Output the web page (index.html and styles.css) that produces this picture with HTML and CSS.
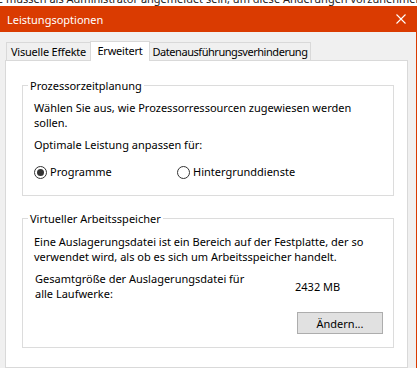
FILE: index.html
```html
<!DOCTYPE html>
<html lang="de">
<head>
  <meta charset="UTF-8">
  <meta name="viewport" content="width=device-width, initial-scale=1.0">
  <title>Leistungsoptionen</title>
  <link rel="stylesheet" href="styles.css">
</head>
<body>
  <div class="behind">
    <p class="behind-text">Sie müssen als Administrator angemeldet sein, um diese Änderungen vorzunehmen.</p>
    <span class="behind-bar"></span>
  </div>

  <div class="window">
    <header class="titlebar">
      <span class="title">Leistungsoptionen</span>
      <svg class="close" width="10" height="10" viewBox="0 0 10 10">
        <path d="M0.5 0.5 L9.5 9.5 M9.5 0.5 L0.5 9.5" stroke="#fff" stroke-width="1.1" fill="none"/>
      </svg>
    </header>

    <div class="dialog">
      <ul class="tabs">
        <li class="tab tab-first">Visuelle Effekte</li>
        <li class="tab active">Erweitert</li>
        <li class="tab tab-last">Datenausführungsverhinderung</li>
      </ul>

      <div class="page">
        <fieldset class="group">
          <legend>Prozessorzeitplanung</legend>
          <p>Wählen Sie aus, wie Prozessorressourcen zugewiesen werden<br>sollen.</p>
          <p class="spaced">Optimale Leistung anpassen für:</p>
          <div class="radios">
            <label class="radio radio-first"><span class="dot checked"></span>Programme</label>
            <label class="radio"><span class="dot"></span>Hintergrunddienste</label>
          </div>
        </fieldset>

        <fieldset class="group group-memory">
          <legend>Virtueller Arbeitsspeicher</legend>
          <p>Eine Auslagerungsdatei ist ein Bereich auf der Festplatte, der so<br>verwendet wird, als ob es sich um Arbeitsspeicher handelt.</p>
          <div class="size-row">
            <span class="size-label">Gesamtgröße der Auslagerungsdatei für<br>alle Laufwerke:</span>
            <span class="size-value">2432 MB</span>
          </div>
          <div class="actions">
            <button class="btn">Ändern...</button>
          </div>
        </fieldset>
      </div>
    </div>
  </div>
</body>
</html>
```

FILE: styles.css
```css
html, body {
  margin: 0;
  height: 100%;
}

body {
  background-color: #fff;
  font-family: "Noto Sans", "Open Sans", sans-serif;
  font-size: 11px;
  color: #000;
  overflow: hidden;
  display: flex;
  flex-direction: column;
}

.behind {
  display: flex;
  height: 6px;
  overflow: hidden;
}

.behind-text {
  margin: -9px 0 0 -12px;
  line-height: 15px;
  font-size: 11px;
  color: #222;
  white-space: nowrap;
}

.behind-bar {
  margin-left: auto;
  margin-right: 41px;
  width: 3px;
  background-color: #cfcfcf;
}

.window {
  flex: 1;
  display: flex;
  flex-direction: column;
  width: 416px;
  border-right: 1px solid #da3b01;
}

.titlebar {
  display: flex;
  justify-content: space-between;
  align-items: center;
  height: 26px;
  padding: 0 10px 0 7px;
  background-color: #da3b01;
  color: #fff;
  font-size: 11px;
}

.close {
  display: block;
}

.dialog {
  flex: 1;
  display: flex;
  flex-direction: column;
  background-color: #f0f0f0;
  padding: 9px 8px 0 5px;
}

.tabs {
  display: flex;
  align-items: flex-end;
  list-style: none;
  margin: 0;
  padding: 0 0 0 1px;
}

.tab {
  box-sizing: border-box;
  height: 18px;
  line-height: 17px;
  text-align: center;
  white-space: nowrap;
  border: 1px solid #d9d9d9;
  border-bottom: none;
  background-color: #f0f0f0;
  letter-spacing: -0.2px;
}

.tab-first {
  width: 84px;
  border-right: none;
}

.tab-last {
  width: 161px;
  border-left: none;
  letter-spacing: -0.45px;
}

.tab.active {
  position: relative;
  width: 60px;
  height: 20px;
  margin-bottom: -1px;
  background-color: #fff;
}

.page {
  flex: 1;
  background-color: #fff;
  border: 1px solid #d9d9d9;
  padding-top: 17px;
}

.group {
  margin: 0 13px 0 16px;
  padding: 7px 10px 15px 11px;
  border: 1px solid #dcdcdc;
}

.group legend {
  padding: 0 2px;
  margin-left: -6px;
  line-height: 15px;
}

.group p {
  margin: 0;
  line-height: 15px;
}

.group p.spaced {
  margin-top: 7px;
}

.radios {
  display: flex;
  margin-top: 12px;
  line-height: 16px;
}

.radio {
  display: flex;
  align-items: center;
  gap: 3px;
}

.radio-first {
  width: 143px;
}

.dot {
  box-sizing: border-box;
  width: 13px;
  height: 13px;
  border: 1px solid #333;
  border-radius: 50%;
  display: flex;
  align-items: center;
  justify-content: center;
}

.dot.checked::after {
  content: "";
  width: 7px;
  height: 7px;
  border-radius: 50%;
  background-color: #333;
}

.group-memory {
  margin-top: 15px;
  padding: 8px 10px 13px 11px;
}

.size-row {
  display: flex;
  align-items: center;
  margin-top: 7px;
  line-height: 15px;
}

.size-label {
  width: 260px;
  padding-left: 1px;
}

.actions {
  display: flex;
  justify-content: flex-end;
  margin-top: 11px;
}

.btn {
  width: 86px;
  height: 22px;
  margin: 0;
  padding: 0;
  font-family: inherit;
  font-size: 11px;
  color: #000;
  background-color: #e1e1e1;
  border: 1px solid #adadad;
}
```
